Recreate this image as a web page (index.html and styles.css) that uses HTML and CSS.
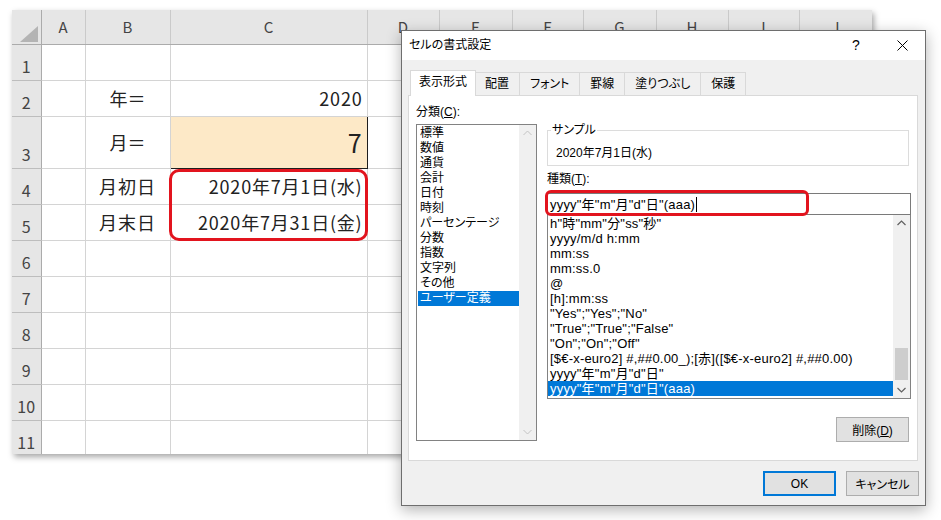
FILE: index.html
```html
<!DOCTYPE html>
<html lang="ja">
  <head>
    <meta charset="UTF-8" />
    <title>セルの書式設定</title>
    <link rel="stylesheet" href="styles.css">
  </head>
  <body>
    <div class="sheet">
      <table class="grid">
        <colgroup>
          <col style="width:29px"><col style="width:44px"><col style="width:85px"><col style="width:197px">
          <col style="width:72px"><col style="width:73px"><col style="width:71px"><col style="width:73px">
          <col style="width:72px"><col style="width:71px"><col style="width:73px">
        </colgroup>
        <thead>
          <tr>
            <th class="corner">
              <svg width="18" height="16" viewBox="0 0 18 16"><polygon points="18,0 18,16 0,16" fill="#b4b4b4"/></svg>
            </th>
            <th>A</th><th>B</th><th>C</th><th>D</th><th>E</th><th>F</th><th>G</th><th>H</th><th>I</th><th>J</th>
          </tr>
        </thead>
        <tbody>
          <tr><th>1</th><td></td><td></td><td></td><td></td><td></td><td></td><td></td><td></td><td></td><td></td></tr>
          <tr><th>2</th><td></td><td class="label">年＝</td><td class="num">2020</td><td></td><td></td><td></td><td></td><td></td><td></td><td></td></tr>
          <tr class="tall"><th>3</th><td></td><td class="label">月＝</td><td class="num entry">7</td><td></td><td></td><td></td><td></td><td></td><td></td><td></td></tr>
          <tr><th>4</th><td></td><td class="label spaced">月初日</td><td class="num">2020年7月1日(水)</td><td></td><td></td><td></td><td></td><td></td><td></td><td></td></tr>
          <tr><th>5</th><td></td><td class="label spaced">月末日</td><td class="num">2020年7月31日(金)</td><td></td><td></td><td></td><td></td><td></td><td></td><td></td></tr>
          <tr><th>6</th><td></td><td></td><td></td><td></td><td></td><td></td><td></td><td></td><td></td><td></td></tr>
          <tr><th>7</th><td></td><td></td><td></td><td></td><td></td><td></td><td></td><td></td><td></td><td></td></tr>
          <tr><th>8</th><td></td><td></td><td></td><td></td><td></td><td></td><td></td><td></td><td></td><td></td></tr>
          <tr><th>9</th><td></td><td></td><td></td><td></td><td></td><td></td><td></td><td></td><td></td><td></td></tr>
          <tr><th>10</th><td></td><td></td><td></td><td></td><td></td><td></td><td></td><td></td><td></td><td></td></tr>
          <tr><th>11</th><td></td><td></td><td></td><td></td><td></td><td></td><td></td><td></td><td></td><td></td></tr>
        </tbody>
      </table>
      <div class="mark"></div>
    </div>

    <div class="dialog">
      <div class="title-bar">
        <span class="title">セルの書式設定</span>
        <span class="help">?</span>
        <span class="close">
          <svg width="11" height="11" viewBox="0 0 11 11"><path d="M0.5 0.5L10.5 10.5M10.5 0.5L0.5 10.5" stroke="#000" stroke-width="1"/></svg>
        </span>
      </div>
      <div class="tabs">
        <div class="tab active">表示形式</div>
        <div class="tab">配置</div>
        <div class="tab">フォント</div>
        <div class="tab">罫線</div>
        <div class="tab">塗りつぶし</div>
        <div class="tab">保護</div>
      </div>
      <div class="panel">
        <div class="col-left">
          <div class="caption">分類(<u>C</u>):</div>
          <div class="listbox category">
            <ul class="items">
              <li>標準</li>
              <li>数値</li>
              <li>通貨</li>
              <li>会計</li>
              <li>日付</li>
              <li>時刻</li>
              <li>パーセンテージ</li>
              <li>分数</li>
              <li>指数</li>
              <li>文字列</li>
              <li>その他</li>
              <li class="selected">ユーザー定義</li>
            </ul>
            <div class="scrollbar off">
              <svg width="17" height="17" viewBox="0 0 17 17"><polyline points="4.5,10 8.5,6 12.5,10" fill="none" stroke="#c4c4c4" stroke-width="1"/></svg>
              <svg width="17" height="17" viewBox="0 0 17 17"><polyline points="4.5,7 8.5,11 12.5,7" fill="none" stroke="#c4c4c4" stroke-width="1"/></svg>
            </div>
          </div>
        </div>
        <div class="col-right">
          <fieldset class="sample">
            <legend>サンプル</legend>
            <div class="sample-text">2020年7月1日(水)</div>
          </fieldset>
          <div class="caption kind">種類(<u>T</u>):</div>
          <div class="type-input">
            <span>yyyy"年"m"月"d"日"(aaa)</span><span class="caret"></span>
            <div class="hilite"></div>
          </div>
          <div class="listbox formats">
            <ul class="items">
              <li>h"時"mm"分"ss"秒"</li>
              <li>yyyy/m/d h:mm</li>
              <li>mm:ss</li>
              <li>mm:ss.0</li>
              <li>@</li>
              <li>[h]:mm:ss</li>
              <li>"Yes";"Yes";"No"</li>
              <li>"True";"True";"False"</li>
              <li>"On";"On";"Off"</li>
              <li>[$€-x-euro2] #,##0.00_);[赤]([$€-x-euro2] #,##0.00)</li>
              <li>yyyy"年"m"月"d"日"</li>
              <li class="selected">yyyy"年"m"月"d"日"(aaa)</li>
            </ul>
            <div class="scrollbar">
              <svg width="17" height="17" viewBox="0 0 17 17"><polyline points="4.5,10 8.5,6 12.5,10" fill="none" stroke="#606060" stroke-width="1.2"/></svg>
              <div class="track"><div class="thumb"></div></div>
              <svg width="17" height="17" viewBox="0 0 17 17"><polyline points="4.5,7 8.5,11 12.5,7" fill="none" stroke="#606060" stroke-width="1.2"/></svg>
            </div>
          </div>
          <div class="delete-row">
            <button class="btn">削除(<u>D</u>)</button>
          </div>
        </div>
      </div>
      <div class="footer">
        <button class="btn ok">OK</button>
        <button class="btn">キャンセル</button>
      </div>
    </div>
  </body>
</html>
```

FILE: styles.css
```css
* {
  box-sizing: border-box;
}
body {
  margin: 0;
  width: 941px;
  height: 520px;
  position: relative;
  overflow: hidden;
  background: #fff;
  font-family: "Noto Sans CJK JP", sans-serif;
  color: #000;
}

/* worksheet window */
.sheet {
  position: absolute;
  left: 12px;
  top: 10px;
  width: 860px;
  height: 444px;
  overflow: hidden;
  background: #fff;
  box-shadow: 2px 3px 6px rgba(0, 0, 0, 0.35);
}
.grid {
  border-collapse: collapse;
  table-layout: fixed;
  width: 860px;
}
.grid th,
.grid td {
  padding: 0;
  border: 1px solid #d4d4d4;
  white-space: nowrap;
  overflow: hidden;
}
.grid thead tr {
  height: 34px;
}
.grid thead th {
  background: #e6e6e6;
  border-color: #cacaca;
  border-bottom-color: #ababab;
  border-top: none;
  font-weight: normal;
  font-size: 15px;
  color: #444;
  vertical-align: middle;
}
.grid thead th.corner {
  border-left: none;
  border-right-color: #ababab;
  text-align: right;
  vertical-align: bottom;
  padding: 0 3px 2px 0;
}
.grid thead th.corner svg {
  display: block;
  margin-left: auto;
}
.grid tbody tr {
  height: 36px;
}
.grid tbody tr.tall {
  height: 52px;
}
.grid tbody th {
  background: #e6e6e6;
  border-color: #bdbdbd;
  border-left: none;
  border-right-color: #ababab;
  font-weight: normal;
  font-size: 16px;
  color: #444;
  vertical-align: bottom;
  padding-bottom: 2px;
}
.grid td {
  font-size: 18px;
  vertical-align: middle;
  color: #222;
}
.grid td.label {
  text-align: center;
}
.grid td.spaced {
  letter-spacing: 1px;
}
.grid td.num {
  text-align: right;
  padding-right: 4px;
  letter-spacing: 0.8px;
}
.grid td.entry {
  background: #fde9c7;
  border: 1px solid #1e1e1e;
  font-size: 25px;
}
.mark {
  position: absolute;
  left: 157px;
  top: 159px;
  width: 199px;
  height: 72px;
  border: 3px solid #e2141e;
  border-radius: 10px;
}

/* format cells dialog */
.dialog {
  position: absolute;
  left: 401px;
  top: 30px;
  width: 525px;
  height: 476px;
  display: flex;
  flex-direction: column;
  background: #f0f0f0;
  border: 1px solid #6e6e6e;
  box-shadow: 0 4px 14px rgba(0, 0, 0, 0.3);
  font-family: "Liberation Sans", "Noto Sans CJK JP", sans-serif;
  font-feature-settings: "palt";
  font-size: 12px;
  line-height: 15px;
}
.title-bar {
  height: 29px;
  flex: none;
  display: flex;
  align-items: center;
  background: #fff;
  padding-left: 7px;
}
.title-bar .help {
  margin-left: auto;
  width: 46px;
  text-align: center;
  font-size: 14px;
}
.title-bar .close {
  width: 46px;
  display: flex;
  justify-content: center;
}
.tabs {
  height: 35px;
  flex: none;
  display: flex;
  align-items: flex-end;
  padding-left: 10px;
}
.tab {
  height: 23px;
  padding: 0 10px;
  display: flex;
  align-items: center;
  background: #f0f0f0;
  border: 1px solid #d9d9d9;
  border-bottom: none;
  margin-left: -1px;
}
.tab.active {
  height: 26px;
  padding: 0 8px 2px;
  margin: 0 -1px -1px -2px;
  background: #fff;
  position: relative;
  z-index: 1;
}
.panel {
  height: 366px;
  flex: none;
  margin: 0 7px 0 6px;
  background: #fff;
  border: 1px solid #d9d9d9;
  display: flex;
  padding: 9px 0 0 7px;
}
.col-left {
  width: 121px;
}
.caption {
  height: 15px;
}
.listbox {
  display: flex;
  border: 1px solid #828282;
  background: #fff;
  overflow: hidden;
}
.listbox .items {
  flex: 1;
  list-style: none;
  margin: 0;
  padding: 1px 0 0;
  white-space: nowrap;
  overflow: hidden;
}
.listbox li {
  height: 15px;
  padding-left: 2px;
}
.listbox li.selected {
  background: #0078d7;
  color: #fff;
}
.category {
  margin-top: 4px;
  height: 317px;
}
.category .items {
  padding-left: 1px;
}
.scrollbar {
  width: 17px;
  flex: none;
  display: flex;
  flex-direction: column;
  justify-content: space-between;
  background: #f0f0f0;
}
.scrollbar svg {
  display: block;
}
.scrollbar .track {
  flex: 1;
  position: relative;
}
.scrollbar .thumb {
  position: absolute;
  left: 2px;
  right: 2px;
  top: 116px;
  height: 32px;
  background: #cdcdcd;
}
.col-right {
  width: 364px;
  margin-left: 10px;
  padding-top: 18px;
}
.sample {
  margin: 0;
  width: 362px;
  height: 43px;
  padding: 8px 0 0 8px;
  border: 1px solid #dcdcdc;
}
.sample legend {
  padding: 0 1px;
  margin-left: -5px;
}
.kind {
  margin-top: 6px;
}
.type-input {
  position: relative;
  margin-top: 6px;
  height: 22px;
  border: 1px solid #7a7a7a;
  padding: 3px 0 0 2px;
  display: flex;
  align-items: flex-start;
  background: #fff;
  font-size: 13px;
  letter-spacing: 0.2px;
}
.type-input .caret {
  width: 1px;
  height: 15px;
  background: #000;
  margin-left: 1px;
}
.type-input .hilite {
  position: absolute;
  left: -3px;
  top: -4px;
  width: 264px;
  height: 26px;
  border: 3px solid #e2141e;
  border-radius: 6px;
}
.formats {
  margin-top: -1px;
  height: 185px;
  font-size: 13px;
  letter-spacing: 0.2px;
}
.formats .items {
  padding-left: 0;
}
.formats li {
  padding-left: 2px;
}
.delete-row {
  display: flex;
  justify-content: flex-end;
  margin-top: 18px;
  padding-right: 2px;
}
.btn {
  width: 73px;
  height: 25px;
  padding: 0;
  background: #e1e1e1;
  border: 1px solid #adadad;
  font-family: "Liberation Sans", "Noto Sans CJK JP", sans-serif;
  font-feature-settings: "palt";
  font-size: 12px;
  color: #000;
}
.footer {
  display: flex;
  justify-content: flex-end;
  gap: 10px;
  padding: 10px 6px 0 0;
}
.btn.ok {
  border: 2px solid #0078d7;
}
```
